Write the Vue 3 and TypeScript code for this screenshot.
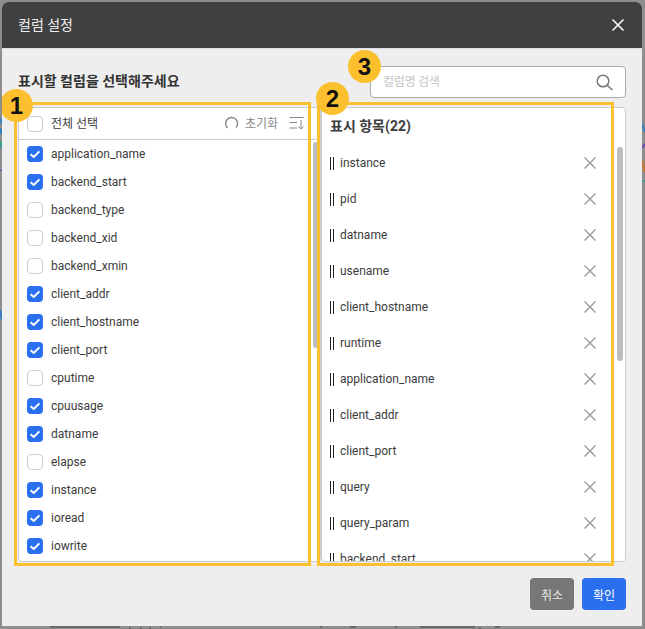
<template>
  <div class="screen">
    <svg class="backdrop" width="645" height="629" viewBox="0 0 645 629">
      <path d="M0 118L2 124M0 128L2 135" stroke="#2f7fc4" stroke-width="2" fill="none" />
      <path d="M0 141L2 148" stroke="#2a9d8f" stroke-width="2" fill="none" />
      <path d="M0 170.5H2" stroke="#6a3fc4" stroke-width="1" fill="none" />
      <path d="M0 310L2 320" stroke="#2f7fc4" stroke-width="2" fill="none" />
      <path d="M642 124L645 132" stroke="#2f7fc4" stroke-width="2" fill="none" />
      <path d="M642 148L645 144" stroke="#6a3fc4" stroke-width="1.5" fill="none" />
      <path d="M642 160L645 172" stroke="#c8742a" stroke-width="2" fill="none" />
      <path d="M642 181H645" stroke="#2a9d8f" stroke-width="1.5" fill="none" />
      <path d="M50 627h70M130 627v2M140 627c1 1 1 1 1 2M150 627v2M160 627h1M320 627h2M350 627h6M395 627h2M420 627h55M480 627v2M495 627h5" stroke="#444" stroke-width="1" fill="none" />
    </svg>

    <div class="modal">
      <header class="modal-header">
        <span class="modal-title">컬럼 설정</span>
        <svg class="close" width="14" height="14" viewBox="0 0 14 14">
          <path d="M1.5 1.5L12.5 12.5M12.5 1.5L1.5 12.5" stroke="#fff" stroke-width="1.5" fill="none" />
        </svg>
      </header>

      <div class="modal-body">
        <div class="top-row">
          <h2>표시할 컬럼을 선택해주세요</h2>
          <div class="search">
            <span class="placeholder">컬럼명 검색</span>
            <svg width="17" height="17" viewBox="0 0 17 17">
              <circle cx="7" cy="7" r="5.8" stroke="#777" stroke-width="1.5" fill="none" />
              <path d="M11.2 11.2L16.4 16" stroke="#777" stroke-width="1.5" fill="none" />
            </svg>
          </div>
        </div>

        <div class="panels">
          <section class="panel left">
            <div class="left-head">
              <span class="box"></span>
              <span class="all">전체 선택</span>
              <svg class="reset-icon" width="14" height="14" viewBox="0 0 14 14">
                <path d="M2.6 12A6 6 0 1 1 11 11.6" stroke="#888" stroke-width="1.4" fill="none" />
              </svg>
              <span class="reset">초기화</span>
              <svg class="sort-icon" width="15" height="14" viewBox="0 0 15 14">
                <path d="M0.5 1.5H14.5M0.5 6.5H8M0.5 12H8M12 4V13M9.5 10.5L12 13L14.5 10.5" stroke="#888" stroke-width="1" fill="none" />
              </svg>
            </div>
            <div class="left-list">
              <div v-for="col in columns" :key="col.name" class="left-row">
                <span class="box" :class="{ on: col.checked }">
                  <svg v-if="col.checked" width="16" height="16" viewBox="0 0 16 16">
                    <path d="M3.6 8.2L6.8 11L12.4 5.4" stroke="#fff" stroke-width="2" fill="none" />
                  </svg>
                </span>
                <span>{{ col.name }}</span>
              </div>
            </div>
            <div class="thumb left-thumb"></div>
          </section>

          <section class="panel right">
            <h3>표시 항목(22)</h3>
            <div class="right-list">
              <div v-for="name in selected" :key="name" class="right-row">
                <span class="grip"></span>
                <span class="right-name">{{ name }}</span>
                <svg width="14" height="14" viewBox="0 0 14 14">
                  <path d="M1.5 1.5L12.5 12.5M12.5 1.5L1.5 12.5" stroke="#999" stroke-width="1.4" fill="none" />
                </svg>
              </div>
            </div>
            <div class="thumb right-thumb"></div>
          </section>
        </div>

        <footer class="actions">
          <button class="cancel">취소</button>
          <button class="ok">확인</button>
        </footer>
      </div>

      <div class="mark-box box-one"></div>
      <div class="mark-box box-two"></div>
      <div class="badge badge-one">1</div>
      <div class="badge badge-two">2</div>
      <div class="badge badge-three">3</div>
    </div>
  </div>
</template>

<script setup lang="ts">
const checked = ['application_name', 'backend_start', 'client_addr', 'client_hostname', 'client_port', 'cpuusage', 'datname', 'instance', 'ioread', 'iowrite']

const columns = [
  'application_name', 'backend_start', 'backend_type', 'backend_xid', 'backend_xmin',
  'client_addr', 'client_hostname', 'client_port', 'cputime', 'cpuusage',
  'datname', 'elapse', 'instance', 'ioread', 'iowrite',
].map((name) => ({ name, checked: checked.includes(name) }))

const selected = [
  'instance', 'pid', 'datname', 'usename', 'client_hostname', 'runtime',
  'application_name', 'client_addr', 'client_port', 'query', 'query_param', 'backend_start',
]
</script>

<style>
html, body { margin: 0; background: #8e8e8e; }
</style>

<style scoped>
.screen {
  position: relative;
  width: 645px;
  height: 629px;
  padding: 2px 3px 3px 2px;
  box-sizing: border-box;
  background: #8e8e8e;
  overflow: hidden;
  font-family: Roboto, "Noto Sans CJK KR", sans-serif;
  color: #3c3c3c;
}

.backdrop {
  position: absolute;
  left: 0;
  top: 0;
}

.modal {
  position: relative;
  height: 624px;
  background: #eee;
  border-radius: 6px 6px 0 0;
  overflow: hidden;
}

.modal-header {
  height: 47px;
  background: #404040;
  color: #eee;
  font-size: 14px;
  display: flex;
  align-items: center;
  justify-content: space-between;
  padding: 0 17px 0 16px;
  border-bottom: 1px solid #ddd;
  box-sizing: border-box;
}

.modal-title { margin-top: -2px; }

.modal-body {
  padding: 17px 16px 0;
}

.top-row {
  display: flex;
  justify-content: space-between;
  height: 41px;
}

h2 {
  margin: 4px 0 0;
  font-size: 14px;
  font-weight: 700;
  color: #333;
}

.search {
  width: 256px;
  height: 32px;
  box-sizing: border-box;
  background: #fff;
  border: 1px solid #aaa;
  border-radius: 4px;
  display: flex;
  align-items: center;
  justify-content: space-between;
  padding: 0 12px 0 12px;
  font-size: 12px;
  color: #c4c4c4;
}

.placeholder { margin-top: -3px; letter-spacing: -0.3px; }

.panels {
  display: flex;
  height: 455px;
}

.panel {
  position: relative;
  background: #fff;
  border: 1px solid #ccc;
  box-sizing: border-box;
  border-radius: 4px;
  overflow: hidden;
}

.left { width: 303px; }
.right { width: 305px; }

.left-head {
  height: 32px;
  display: flex;
  align-items: center;
  padding: 0 16px 0 8px;
  border-bottom: 1px solid #ccc;
  box-sizing: border-box;
  font-size: 12px;
}

.all { margin: -3px 0 0 8px; flex: 1; }
.reset { margin: -3px 11px 0 6px; color: #888; font-size: 12px; }
.reset-icon, .sort-icon { margin-top: -2px; }

.box {
  width: 16px;
  height: 16px;
  flex: none;
  box-sizing: border-box;
  border: 1px solid #ccc;
  border-radius: 4px;
  background: #fff;
}

.box.on {
  background: #2a6ff0;
  border: none;
}

.box svg { display: block; }

.left-row {
  height: 28px;
  display: flex;
  align-items: center;
  gap: 8px;
  padding-left: 8px;
  font-size: 12px;
}

.thumb {
  position: absolute;
  background: #bdbdbd;
  border-radius: 3px;
}

.left-thumb { left: 294px; top: 34px; width: 6px; height: 206px; }
.right-thumb { left: 295px; top: 39px; width: 6px; height: 214px; }

h3 {
  margin: 0;
  height: 37px;
  padding: 7px 0 0 8px;
  box-sizing: border-box;
  font-size: 14px;
  font-weight: 700;
}

.right-row {
  height: 36px;
  display: flex;
  align-items: center;
  padding: 0 28px 0 8px;
  font-size: 12px;
}

.grip {
  width: 4px;
  height: 13px;
  flex: none;
  border-left: 1px solid #222;
  border-right: 1px solid #222;
  box-sizing: border-box;
}

.right-name { flex: 1; margin-left: 6px; }

.actions {
  display: flex;
  justify-content: flex-end;
  gap: 8px;
  margin-top: 16px;
}

button {
  width: 44px;
  height: 32px;
  border: none;
  border-radius: 4px;
  color: #fff;
  font: inherit;
  font-size: 12px;
  padding: 0;
}

.cancel { background: #777; color: #e6e6e6; }
.ok { background: #2a6ff0; }

.mark-box {
  position: absolute;
  top: 100px;
  height: 464px;
  box-sizing: border-box;
  border: 3px solid #fcc02e;
}

.box-one { left: 12px; width: 297px; }
.box-two { left: 315px; width: 297px; }

.badge {
  position: absolute;
  width: 33px;
  height: 33px;
  border-radius: 50%;
  background: #fcc02e;
  color: #111;
  font-size: 24px;
  font-weight: 700;
  display: flex;
  align-items: center;
  justify-content: center;
  font-family: "Liberation Sans", sans-serif;
}

.badge-one { left: -2px; top: 87px; }
.badge-two { left: 314px; top: 80px; }
.badge-three { left: 346px; top: 48px; }
</style>
